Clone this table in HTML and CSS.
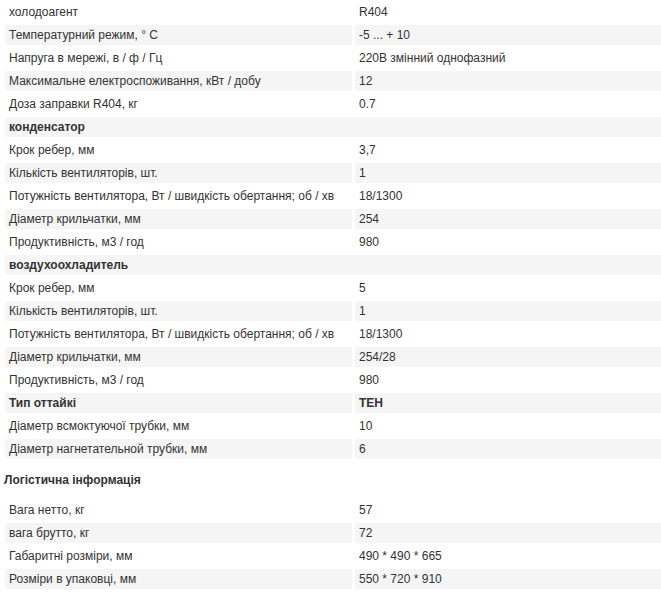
FILE: index.html
```html
<!DOCTYPE html>
<html lang="uk">
<head>
<meta charset="utf-8">
<title>Характеристики</title>
<link rel="stylesheet" href="styles.css">
</head>
<body>
<table class="specs specs-main">
<colgroup><col class="c-key"><col class="c-val"></colgroup>
<tbody>
<tr><td>холодоагент</td><td>R404</td></tr>
<tr><td>Температурний режим, ° С</td><td>-5 ... + 10</td></tr>
<tr><td>Напруга в мережі, в / ф / Гц</td><td>220В змінний однофазний</td></tr>
<tr><td>Максимальне електроспоживання, кВт / добу</td><td>12</td></tr>
<tr><td>Доза заправки R404, кг</td><td>0.7</td></tr>
<tr><td class="group" colspan="2">конденсатор</td></tr>
<tr><td>Крок ребер, мм</td><td>3,7</td></tr>
<tr><td>Кількість вентиляторів, шт.</td><td>1</td></tr>
<tr><td>Потужність вентилятора, Вт / швидкість обертання; об / хв</td><td>18/1300</td></tr>
<tr><td>Діаметр крильчатки, мм</td><td>254</td></tr>
<tr><td>Продуктивність, м3 / год</td><td>980</td></tr>
<tr><td class="group" colspan="2">воздухоохладитель</td></tr>
<tr><td>Крок ребер, мм</td><td>5</td></tr>
<tr><td>Кількість вентиляторів, шт.</td><td>1</td></tr>
<tr><td>Потужність вентилятора, Вт / швидкість обертання; об / хв</td><td>18/1300</td></tr>
<tr><td>Діаметр крильчатки, мм</td><td>254/28</td></tr>
<tr><td>Продуктивність, м3 / год</td><td>980</td></tr>
<tr><td class="group">Тип оттайкі</td><td class="group">ТЕН</td></tr>
<tr><td>Діаметр всмоктуючої трубки, мм</td><td>10</td></tr>
<tr><td>Діаметр нагнетательной трубки, мм</td><td>6</td></tr>
</tbody>
</table>
<div class="section-title">Логістична інформація</div>
<table class="specs">
<colgroup><col class="c-key"><col class="c-val"></colgroup>
<tbody>
<tr><td>Вага нетто, кг</td><td>57</td></tr>
<tr><td>вага брутто, кг</td><td>72</td></tr>
<tr><td>Габаритні розміри, мм</td><td>490 * 490 * 665</td></tr>
<tr><td>Розміри в упаковці, мм</td><td>550 * 720 * 910</td></tr>
</tbody>
</table>
</body>
</html>
```
FILE: styles.css
```css
html, body {
  margin: 0;
  padding: 0;
  overflow: hidden;
  background: #fff;
}
body {
  font-family: "Liberation Sans", Arial, sans-serif;
  font-size: 12px;
  color: #333;
  padding-left: 2px;
}
.specs {
  width: 662px;
  table-layout: fixed;
  border-collapse: separate;
  border-spacing: 3px;
  margin-top: -1px;
}
.c-key { width: 347px; }
.c-val { width: 306px; }
.specs td {
  height: 20px;
  box-sizing: border-box;
  padding: 0 4px;
  line-height: 20px;
  white-space: nowrap;
  vertical-align: middle;
}
.specs tr:nth-child(even) td {
  background: #f5f5f5;
}
.specs td.group {
  font-weight: bold;
}
.section-title {
  font-weight: bold;
  line-height: 15px;
  margin: 11px 0 10px;
  padding-left: 2px;
}
```
